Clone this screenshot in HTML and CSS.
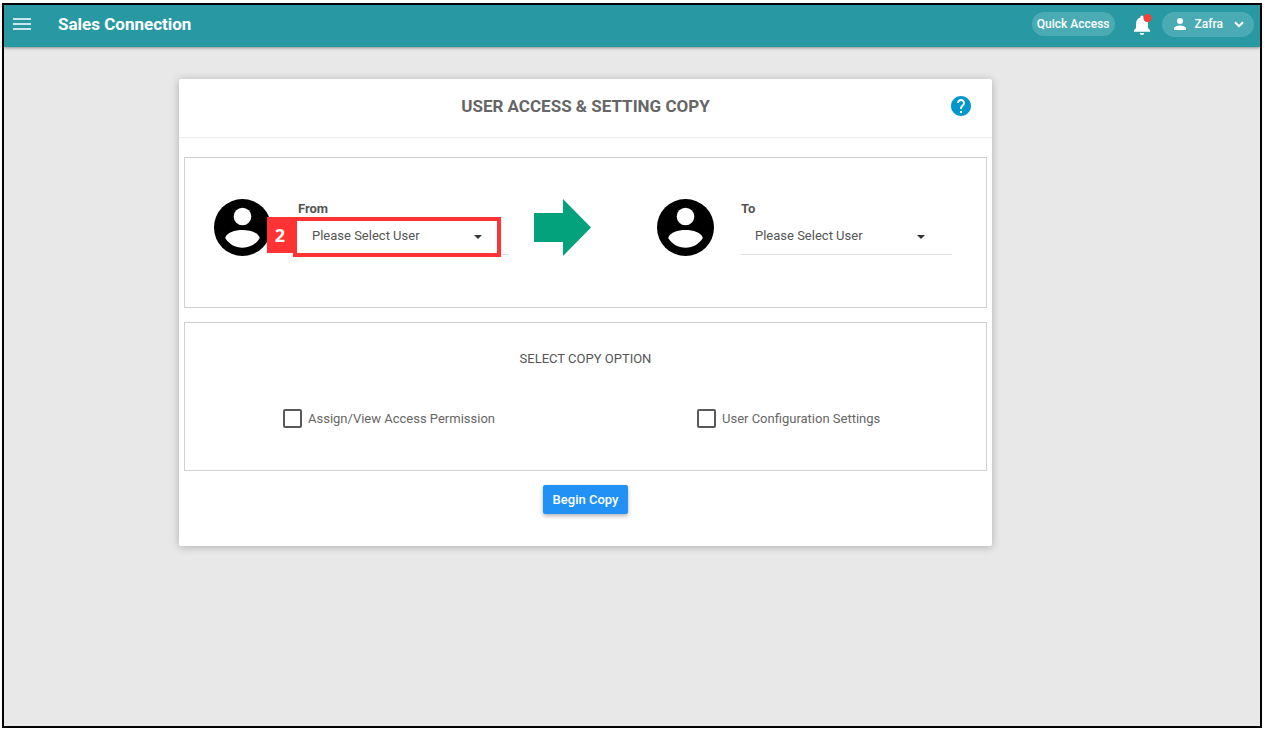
FILE: index.html
```html
<!DOCTYPE html>
<html lang="en">
<head>
<meta charset="utf-8">
<title>User Access &amp; Setting Copy</title>
<link rel="stylesheet" href="styles.css">
</head>
<body>
<div class="frame">
  <header class="topbar">
    <button class="menu-btn" aria-label="Menu">
      <svg width="20" height="14" viewBox="0 0 20 14"><path d="M1 2h18M1 7h18M1 12h18" stroke="#fff" stroke-width="1.600"/></svg>
    </button>
    <span class="brand">Sales Connection</span>
    <button class="pill quick">Quick Access</button>
    <button class="bell" aria-label="Notifications">
      <svg width="18" height="22" viewBox="0 0 18 22"><path fill="#fff" d="M8 22a2.300 2.300 0 0 0 2.300-2h-4.600A2.300 2.300 0 0 0 8 22zM14 15v-4.500c0-3-1.600-5.300-4.400-6V4a1.600 1.600 0 0 0-3.200 0v.5C3.600 5.200 2 7.500 2 10.500V15L0 17.200v1.600h16v-1.600z"/><circle cx="13.500" cy="5" r="4" fill="#f44336"/></svg>
    </button>
    <button class="pill user">
      <svg width="12" height="12" viewBox="0 0 12 12" fill="#fff"><circle cx="6" cy="3" r="3"/><path d="M0 12v-1.500C0 8.500 4 7.500 6 7.500s6 1 6 3V12z"/></svg>
      <span>Zafra</span>
      <svg width="10" height="7" viewBox="0 0 10 7"><path d="M1 1.200l4 4 4-4" fill="none" stroke="#fff" stroke-width="2"/></svg>
    </button>
  </header>

  <main class="page">
    <section class="card">
      <div class="card-head">
        <h1 class="title">USER ACCESS &amp; SETTING COPY</h1>
        <button class="help" aria-label="Help">
          <svg width="20" height="20" viewBox="2 2 20 20"><path fill="#0098cc" d="M12 2C6.480 2 2 6.480 2 12s4.480 10 10 10 10-4.480 10-10S17.520 2 12 2zm1 17h-2v-2h2v2zm2.070-7.750l-.9.920C13.450 12.900 13 13.500 13 15h-2v-.5c0-1.100.450-2.100 1.170-2.830l1.240-1.260c.370-.360.590-.860.590-1.410 0-1.100-.9-2-2-2s-2 .9-2 2H8c0-2.210 1.790-4 4-4s4 1.790 4 4c0 .880-.360 1.680-.930 2.250z"/></svg>
        </button>
      </div>

      <div class="panel users">
        <div class="person">
          <svg class="avatar" viewBox="0 0 57 57"><circle cx="28.500" cy="28.500" r="28.500"/><circle cx="28.500" cy="17.500" r="8.800" fill="#fff"/><path fill="#fff" d="M11.200 39C12.500 33.500 21 31 28.500 31S44.500 33.500 45.800 39C42 45 36 48.800 28.500 48.800S15 45 11.200 39z"/></svg>
          <div class="field">
            <label class="field-label" for="from">From</label>
            <div class="select-wrap">
              <select class="select" id="from"><option>Please Select User</option></select>
              <svg class="caret" width="8" height="4" viewBox="0 0 8 4"><path d="M0 0h8L4 4z" fill="#333"/></svg>
              <div class="marker"><span class="marker-number">2</span></div>
            </div>
          </div>
        </div>
        <svg class="arrow" viewBox="0 0 57 57"><path fill="#04a27c" d="M0 14h29V0l28 28.500L29 57V43H0z"/></svg>
        <div class="person">
          <svg class="avatar" viewBox="0 0 57 57"><circle cx="28.500" cy="28.500" r="28.500"/><circle cx="28.500" cy="17.500" r="8.800" fill="#fff"/><path fill="#fff" d="M11.200 39C12.500 33.500 21 31 28.500 31S44.500 33.500 45.800 39C42 45 36 48.800 28.500 48.800S15 45 11.200 39z"/></svg>
          <div class="field">
            <label class="field-label" for="to">To</label>
            <div class="select-wrap">
              <select class="select" id="to"><option>Please Select User</option></select>
              <svg class="caret" width="8" height="4" viewBox="0 0 8 4"><path d="M0 0h8L4 4z" fill="#333"/></svg>
            </div>
          </div>
        </div>
      </div>

      <div class="panel options">
        <h2 class="subtitle">SELECT COPY OPTION</h2>
        <div class="checks">
          <label class="check"><input class="box" type="checkbox">Assign/View Access Permission</label>
          <label class="check"><input class="box" type="checkbox">User Configuration Settings</label>
        </div>
      </div>

      <button class="begin">Begin Copy</button>
    </section>
  </main>
</div>
</body>
</html>
```
FILE: styles.css
```css
* { box-sizing: border-box; }
body {
  margin: 0;
  padding: 3px 3px 3px 2px;
  background: #fff;
  font-family: Roboto, "Liberation Sans", sans-serif;
  font-size: 13px;
  color: #555;
}
button { border: 0; padding: 0; background: none; font: inherit; cursor: pointer; }
svg { display: block; }

.frame {
  min-height: calc(100vh - 6px);
  border: 2px solid #000;
  background: #e8e8e8;
}

.topbar {
  display: flex;
  align-items: center;
  height: 42px;
  padding: 0 6px 4px 8px;
  background: #2899a3;
  box-shadow: 0 1px 3px rgba(0, 0, 0, .4);
  color: #fff;
}
.brand { margin: 0 auto 0 26px; font-size: 17px; font-weight: 700; }
.pill { background: #4aabb4; color: #fff; border-radius: 13px; font-weight: 500; }
.quick { height: 24px; padding: 0 5px; font-size: 12px; }
.bell { margin: 0 10px 0 19px; }
.user { display: flex; align-items: center; height: 25px; padding: 0 10px 0 12px; font-size: 12px; }
.user span { margin: 0 11px 0 9px; }

.page { display: grid; grid-template-columns: 175fr 813fr 268fr; padding: 32px 0; }
.card {
  grid-column: 2;
  padding-bottom: 32px;
  background: #fff;
  border-radius: 2px;
  box-shadow: 0 1px 8px rgba(0, 0, 0, .25);
}
.card-head {
  display: grid;
  grid-template-columns: 1fr auto 1fr;
  align-items: center;
  height: 59px;
  padding: 0 21px 4px;
  border-bottom: 1px solid #eee;
}
.title { grid-column: 2; margin: 0; font-size: 17px; font-weight: 700; color: #666; }
.help { justify-self: end; }

.panel { margin: 0 5px 14px; border: 1px solid #d3d0d0; }
.users {
  display: flex;
  align-items: flex-start;
  margin-top: 19px;
  padding: 41px 34px 51px 29px;
}
.person { display: flex; flex: 1; gap: 27px; }
.avatar { flex: none; width: 57px; height: 57px; }
.arrow { flex: none; width: 57px; height: 57px; margin: 0 66px 0 25px; }
.field { flex: 1; padding-top: 1px; }
.field-label { display: block; line-height: 18px; font-weight: 700; color: #555; }
.select-wrap { position: relative; }
.select {
  display: block;
  width: 100%;
  height: 37px;
  padding: 0 40px 2px 14px;
  appearance: none;
  border: 0;
  border-bottom: 1px solid #ddd;
  border-radius: 0;
  background: none;
  font: inherit;
  color: #555;
}
.caret { position: absolute; right: 27px; top: 17px; pointer-events: none; }
.marker {
  position: absolute;
  inset: -1px 8px -2px -5px;
  border: 4px solid #ff3333;
  pointer-events: none;
}
.marker-number {
  position: absolute;
  right: calc(100% + 4px);
  top: -4px;
  width: 26px;
  height: 36px;
  background: #ff3333;
  color: #fff;
  font: 700 18px/36px "Open Sans", sans-serif;
  text-align: center;
}

.options { padding: 26px 0 42px; }
.subtitle { margin: 0 0 40px; line-height: 20px; font-size: 13px; font-weight: 400; text-align: center; }
.checks { display: grid; grid-template-columns: 414fr 289fr; padding-left: 98px; }
.check { display: flex; align-items: center; gap: 6px; color: #666; }
.box {
  width: 19px;
  height: 19px;
  margin: 0;
  appearance: none;
  border: 2px solid #5a5a5a;
  border-radius: 2px;
}
.box:checked { background: #1e90f5; }

.begin {
  display: block;
  height: 29px;
  margin: 0 auto;
  padding: 0 10px;
  border-radius: 2px;
  background: #2191f5;
  color: #fff;
  font-weight: 500;
  box-shadow: 0 2px 4px rgba(0, 0, 0, .3);
}
```
